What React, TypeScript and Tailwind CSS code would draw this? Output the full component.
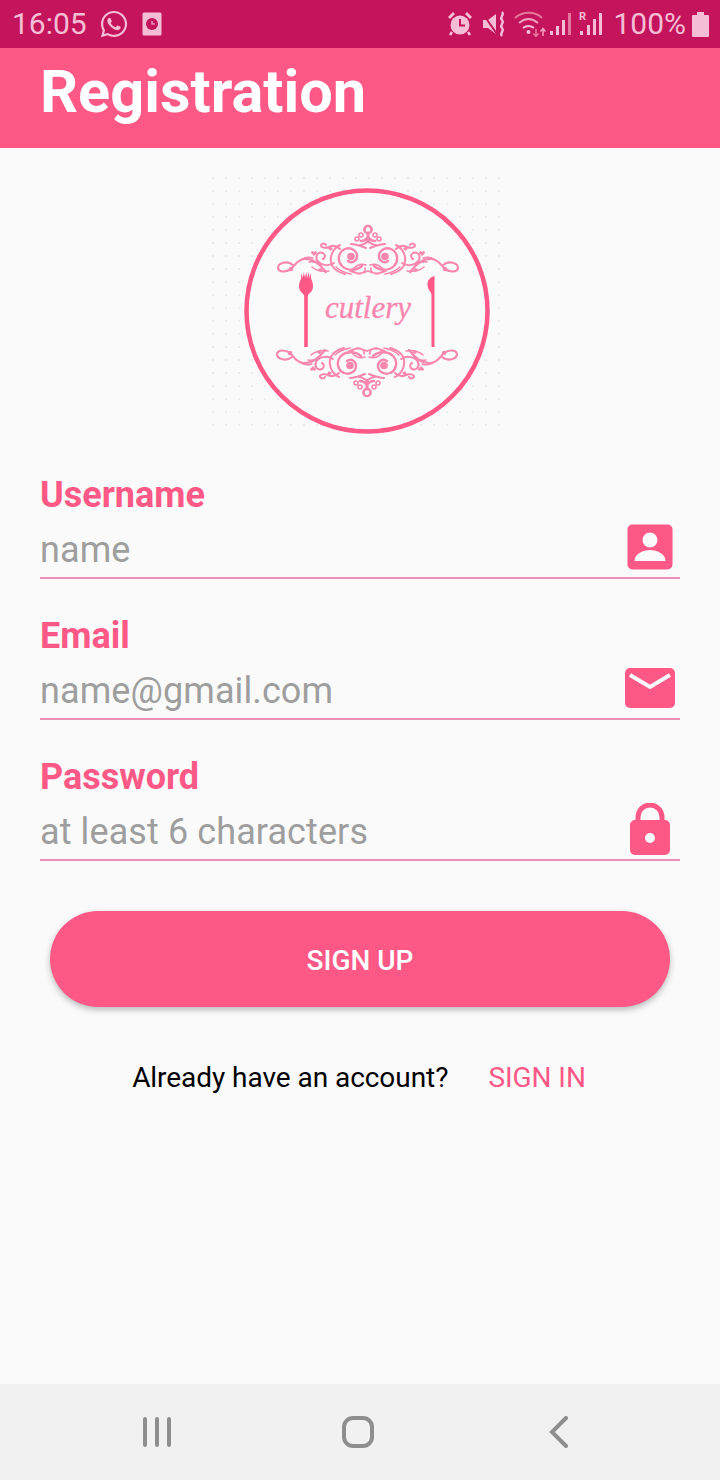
import { FaWhatsapp } from "react-icons/fa";

const roboto = { fontFamily: "Roboto, sans-serif" };

const StatusBar = () => (
  <div className="h-12 bg-[#c4155c] flex items-center justify-between pl-[12px] pr-[11px] text-[#f5bdd6]">
    <div className="flex items-center">
      <span className="text-[30px] leading-none">16:05</span>
      <FaWhatsapp className="ml-[12px] text-[30px]" />
      <svg width="20" height="24" viewBox="0 0 20 24" className="ml-[13px]">
        <rect width="19" height="23" x="0.5" y="0.5" rx="1.5" fill="#f5bdd6" />
        <circle cx="10" cy="12" r="6" fill="#c4155c" />
        <path d="M10 9v3h3" stroke="#f5bdd6" strokeWidth="1.2" fill="none" />
      </svg>
    </div>
    <div className="flex items-center">
      <svg width="26" height="26" viewBox="0 0 26 26" fill="#f5bdd6">
        <path d="M1 6l5-5 2 2-5 5zM25 6l-5-5-2 2 5 5z" />
        <circle cx="13" cy="14" r="9.5" />
        <path d="M13 8v6.500h5" stroke="#c4155c" strokeWidth="2" fill="none" />
        <path d="M5 21l-2 3M21 21l2 3" stroke="#f5bdd6" strokeWidth="2.500" />
      </svg>
      <svg width="26" height="26" viewBox="0 0 26 26" fill="#f5bdd6" className="ml-[9px]">
        <path d="M1 9h5l8-6v20l-8-6H1z" />
        <path d="M1 3l14 20" stroke="#c4155c" strokeWidth="2" />
        <path d="M20 1c3 3-3 5 0 8s-3 5 0 8 -3 5 0 8" stroke="#f5bdd6" strokeWidth="2.400" fill="none" />
      </svg>
      <svg width="32" height="26" viewBox="0 0 32 26" fill="none" className="ml-[6px]">
        <path d="M1 7c8-7 20-7 27 0" stroke="#e5789f" strokeWidth="2" />
        <path d="M5 12c6-5 13-5 19 0" stroke="#f0a0c0" strokeWidth="2" />
        <path d="M9 17c4-3 7-3 11 0" stroke="#f5bdd6" strokeWidth="2" />
        <circle cx="14.500" cy="21" r="2" fill="#f5bdd6" />
        <path d="M22 18v7M19.500 22.500l2.500 3 2.500-3" stroke="#e5789f" strokeWidth="1.500" />
        <path d="M29 25v-7M26.500 20.500l2.500-3 2.500 3" stroke="#f0a0c0" strokeWidth="1.500" />
      </svg>
      <svg width="22" height="24" viewBox="0 0 22 24" fill="#f5bdd6" className="ml-[3px]">
        <rect x="1" y="19" width="3" height="4" />
        <rect x="7" y="14" width="3" height="9" />
        <rect x="13" y="8" width="3" height="15" />
        <rect x="19" y="1" width="3" height="22" fill="#e5789f" />
      </svg>
      <svg width="24" height="26" viewBox="0 0 24 26" fill="#f5bdd6" className="ml-[8px]">
        <text x="0" y="9" fontSize="11" fontWeight="700" style={roboto}>R</text>
        <rect x="1" y="20" width="3" height="4" />
        <rect x="8" y="14" width="3" height="10" />
        <rect x="14" y="8" width="3" height="16" />
        <rect x="20" y="2" width="3" height="22" />
      </svg>
      <span className="ml-[10px] text-[30px] leading-none">100%</span>
      <svg width="17" height="25" viewBox="0 0 17 25" className="ml-[6px]">
        <path d="M5 0h7v3h4a1 1 0 0 1 1 1v20a1 1 0 0 1-1 1H1a1 1 0 0 1-1-1V4a1 1 0 0 1 1-1h4z" fill="#f5bdd6" />
      </svg>
    </div>
  </div>
);

// right half of the ornament, mirrored to get the full thing
const OrnamentHalf = () => (
  <g fill="none" stroke="#f986ae" strokeWidth="2" strokeLinecap="round">
    <path d="M178 86c-4 3-9 0-9-5 0-6 7-9 12-7 7 3 8 12 3 17-5 5-14 5-20 0" strokeWidth="2.400" />
    <path d="M160 73c5-2 10-4 15-4M158 66c3 3 8 5 12 4" />
    <path d="M186 70c8 4 12 14 7 22-3 4-8 6-12 7" />
    <path d="M192 88c6 4 14 2 17-3 2-5-2-9-6-7-3 2-2 5 0 6" />
    <path d="M186 74c3-3 7-4 11-2 4 2 8 0 8-1 0-3-4-3-5-1" />
    <path d="M200 97c6-8 14-14 22-13 7 1 9 6 13 10 4 3 12 4 13-1 0-5-9-8-15-3" strokeWidth="2.200" />
    <path d="M213 83c3-1 8-1 11 1M197 96c5 1 12 0 17-4M205 90c4-3 8-4 12-3" strokeWidth="1.500" />
    <path d="M160 90c6-2 10 1 12 3 2 3-1 6-5 6s-7-3-6-6M158 96c6 3 12 3 18 0M175 99c5-1 11-3 15-7" strokeWidth="1.600" />
    <circle cx="235" cy="94" r="2.200" fill="#f986ae" stroke="none" />
    <circle cx="175" cy="81.500" r="3.800" fill="#f986ae" stroke="none" />
    <path d="M209 78l3 3 3-3c0-2-2-2-3-1-1-1-3-1-3 1zM193 74l3 2 2-3-2-2zM203 95l3 2 2-3-3-1z" fill="#f986ae" stroke="none" />
    <circle cx="158" cy="54.500" r="3.600" strokeWidth="2.200" />
    <circle cx="165" cy="60" r="2" strokeWidth="1.600" />
    <circle cx="169" cy="64" r="2" strokeWidth="1.600" />
    <path d="M158 58v9M158 62c2 3 4 4 7 4" strokeWidth="2.600" />
  </g>
);

const Ornament = () => (
  <g>
    <OrnamentHalf />
    <g transform="translate(316 0) scale(-1 1)">
      <OrnamentHalf />
    </g>
  </g>
);

const Logo = () => (
  <svg width="300" height="265" viewBox="0 0 300 265" className="mt-[27px]">
    <defs>
      <pattern id="dots" width="13" height="13" patternUnits="userSpaceOnUse">
        <circle cx="3" cy="3" r="0.8" fill="#dcdadb" />
      </pattern>
    </defs>
    <rect width="296" height="260" fill="url(#dots)" />
    <circle cx="157" cy="136" r="120.500" fill="#fbfafb" stroke="#fe5886" strokeWidth="4.500" />
    <Ornament />
    <g transform="translate(-1 272) scale(1 -1)">
      <Ornament />
    </g>
    {/* fork */}
    <path d="M94.200 172V122C94.200 120 93 118.500 92 118C90 116 89 114 89 111C89 108 90 106 91 104L91.500 98L92.800 103L93.800 97L95 103L96.200 97L97.400 103L98.500 97L99.600 103L100.800 98L101.200 104C102.200 106 103 108 103 111C103 114 102 116 100 118C99 118.500 97.800 120 97.800 122V172Z" fill="#fe5886" />
    {/* knife */}
    <path d="M221.500 172v-52c0-1-.5-2-1-3-2-2-3-5-3-8 0-4 3-7 7-8v71z" fill="#fe5886" />
    <text x="158" y="143" textAnchor="middle" fontSize="31" fontStyle="italic" fill="#f986ae" stroke="#f986ae" strokeWidth="0.300" style={{ fontFamily: '"Liberation Serif", serif' }}>
      cutlery
    </text>
  </svg>
);

const Field = ({ label, placeholder, icon }: { label: string; placeholder: string; icon: React.ReactNode }) => (
  <div>
    <div className="text-[36px] leading-[40px] font-bold text-[#fe5886]">{label}</div>
    <div className="h-[64px] flex items-center justify-between border-b-2 border-[#ea8fb9]">
      <span className="text-[36px] leading-[40px] text-[#9e9e9e] tracking-[0.1px] mt-[8px]">{placeholder}</span>
      <span className="w-[60px] flex items-center justify-center mt-[2px]">{icon}</span>
    </div>
  </div>
);

const App = () => {
  return (
    <div className="w-[720px] h-[1480px] flex flex-col bg-[#fafafa]" style={roboto}>
      <StatusBar />
      <div className="h-[100px] bg-[#fe5886] pl-[40px]">
        <h1 className="text-[59.5px] leading-[88px] font-bold text-white">Registration</h1>
      </div>
      <div className="flex-1 flex flex-col">
        <div className="flex justify-center">
          <Logo />
        </div>
        <div className="px-[40px] mt-[35px] flex flex-col gap-[37px]">
          <Field
            label="Username"
            placeholder="name"
            icon={
              <svg width="46" height="46" viewBox="0 0 46 46">
                <rect x="0.500" y="0.500" width="45" height="45" rx="5" fill="#fe5886" />
                <circle cx="23" cy="16" r="7.500" fill="#fafafa" />
                <path d="M7.500 37c0-7 8-11 15.500-11s15.500 4 15.500 11z" fill="#fafafa" />
              </svg>
            }
          />
          <Field
            label="Email"
            placeholder="name@gmail.com"
            icon={
              <svg width="50" height="40" viewBox="0 0 50 40">
                <rect width="50" height="40" rx="5" fill="#fe5886" />
                <path d="M5 7l20 12 20-12" stroke="#fafafa" strokeWidth="4" fill="none" />
              </svg>
            }
          />
          <Field
            label="Password"
            placeholder="at least 6 characters"
            icon={
              <svg width="40" height="52" viewBox="0 0 40 52">
                <path d="M8 20v-6a12 12 0 0 1 24 0v6" stroke="#fe5886" strokeWidth="5" fill="none" />
                <rect y="17" width="40" height="35" rx="5" fill="#fe5886" />
                <circle cx="20" cy="35" r="5" fill="#fafafa" />
              </svg>
            }
          />
        </div>
        <button className="mx-[50px] mt-[50px] h-[96px] pt-[3px] rounded-[48px] bg-[#fe5886] text-white text-[28px] font-medium shadow-[0_3px_6px_rgba(0,0,0,0.25)]">
          SIGN UP
        </button>
        <div className="mt-[52px] flex justify-center text-[28px] leading-[38px] tracking-[-0.05px] pr-[2px]">
          <span className="text-black">Already have an account?</span>
          <span className="ml-[40px] text-[#fe5886]">SIGN IN</span>
        </div>
      </div>
      <div className="h-24 bg-[#f1f1f1] flex items-center justify-between pl-[142px] pr-[151px]">
        <svg width="30" height="30" viewBox="0 0 30 30" stroke="#8e8e8e" strokeWidth="4" strokeLinecap="round">
          <path d="M3 2v26M15 2v26M27 2v26" />
        </svg>
        <svg width="32" height="32" viewBox="0 0 32 32" fill="none" stroke="#8e8e8e" strokeWidth="4" className="-ml-[6px]">
          <rect x="2" y="2" width="28" height="28" rx="9" />
        </svg>
        <svg width="20" height="32" viewBox="0 0 20 32" fill="none" stroke="#8e8e8e" strokeWidth="4" strokeLinecap="round">
          <path d="M17 2L3 16l14 14" />
        </svg>
      </div>
    </div>
  );
};

export default App;
